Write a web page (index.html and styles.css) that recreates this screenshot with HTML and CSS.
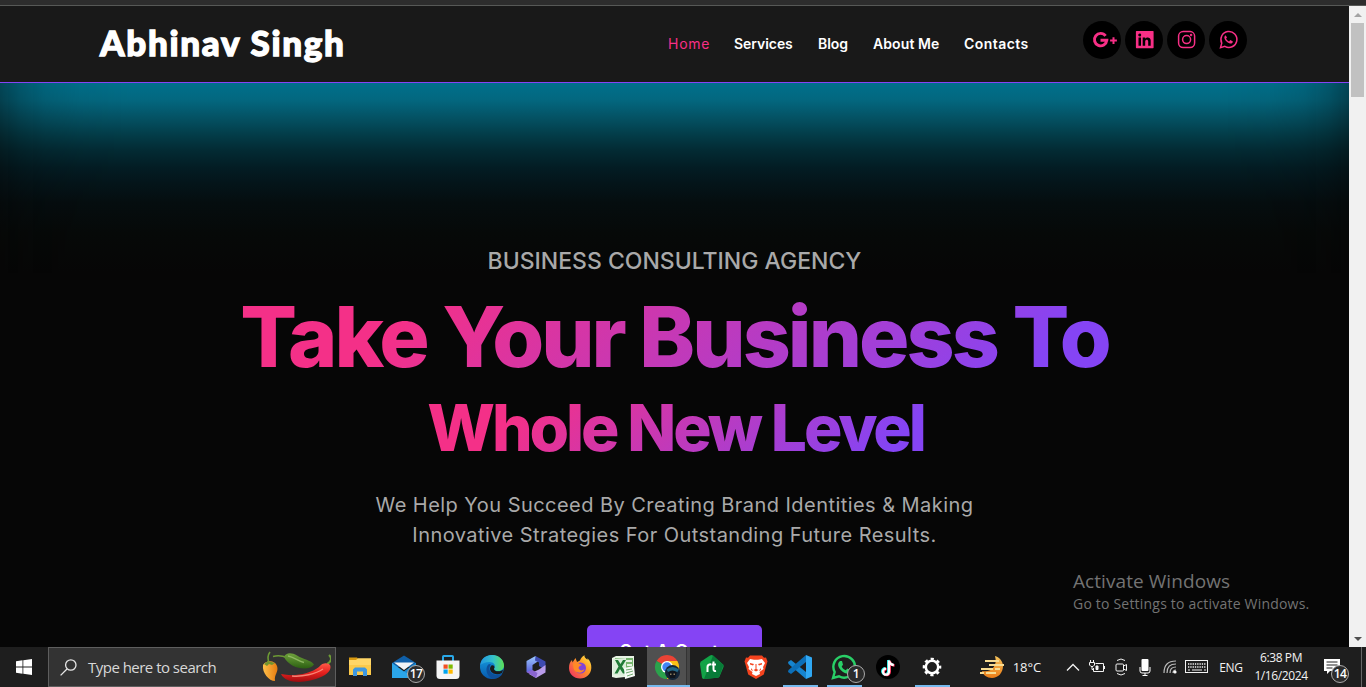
FILE: index.html
```html
<!DOCTYPE html>
<html lang="en">
<head>
<meta charset="utf-8">
<title>Abhinav Singh</title>
<link rel="stylesheet" href="styles.css">
</head>
<body>
<div class="browser-edge"></div>
<div class="viewport">
  <div class="page">
    <header class="header">
      <div class="brand">Abhinav Singh</div>
      <nav class="nav">
        <a class="active">Home</a><a>Services</a><a>Blog</a><a class="about">About Me</a><a class="contacts">Contacts</a>
      </nav>
      <div class="social">
        <a><svg viewBox="0 0 38 38"><path d="M22.600 14.900a6.200 6.200 0 1 0 1.200 4.400H17.500" fill="none" stroke="#f72f86" stroke-width="2.900"/><path d="M30.500 16.200v6.800M27.100 19.600h6.800" stroke="#f72f86" stroke-width="2"/></svg></a>
        <a><svg viewBox="0 0 38 38"><path fill="#f72f86" fill-rule="evenodd" d="M11.500 10h16.500a.6.600 0 0 1 .6.6v16a.6.6 0 0 1-.6.600H11.500a.6.6 0 0 1-.6-.6v-16a.6.6 0 0 1 .6-.6zM13.500 16.600v8.200H16v-8.200zM14.700 12.400a1.500 1.500 0 1 0 .01 3a1.500 1.500 0 0 0-.01-3zM17.700 16.600v8.200h2.500v-4.300c0-2.500 3-2.500 3 0v4.300h2.500v-5.200c0-3.600-4-4-5.500-2v-1z"/></svg></a>
        <a><svg viewBox="0 0 38 38" fill="none" stroke="#f72f86" stroke-width="1.500"><rect x="11.600" y="10.600" width="16" height="16" rx="4.500"/><circle cx="19.600" cy="18.600" r="4"/><circle cx="24.100" cy="14.100" r=".5"/></svg></a>
        <a><svg viewBox="0 0 38 38"><path d="M11.500 26.600l1.250-4.500a8 8 0 1 1 3.100 3.300z" fill="none" stroke="#f72f86" stroke-width="1.500"/><path fill="#f72f86" d="M16.600 14.200c-2.500 1.700-.8 4.900 1.600 6.900 2.300 1.900 5.300 2.300 5.700-.6l-2.600-1.400-1.200 1.300c-1.500-.5-2.500-1.500-3-2.900l.9-1.100z"/></svg></a>
      </div>
    </header>
    <main class="hero">
      <div class="glow"></div>
      <p class="kicker">BUSINESS CONSULTING AGENCY</p>
      <h1 class="title">Take Your Business To</h1>
      <h2 class="title second">Whole New Level</h2>
      <p class="lead">We Help You Succeed By Creating Brand Identities &amp; Making<br>Innovative Strategies For Outstanding Future Results.</p>
      <a class="cta">Get A Quote</a>
    </main>
  </div>
  <div class="scrollbar"><i class="up"></i><i class="thumb"></i><i class="down"></i></div>
  <div class="activate"><div class="a1">Activate Windows</div><div class="a2">Go to Settings to activate Windows.</div></div>
</div>
<footer class="taskbar">
  <div class="start"><svg width="16" height="16" viewBox="0 0 16 16" fill="#fff"><path d="M0 2.200l6.500-.9v6.300H0zM7.300 1.200L16 0v7.600H7.300zM0 8.400h6.500v6.300L0 13.800zM7.300 8.400H16V16l-8.700-1.200z"/></svg></div>
  <div class="search">
    <svg width="17" height="17" viewBox="0 0 17 17" fill="none" stroke="#e6e6e6" stroke-width="1.300"><circle cx="10.800" cy="6" r="5.200"/><path d="M7 10L.6 16.400"/></svg>
    <span>Type here to search</span>
    <svg class="peppers" width="70" height="34" viewBox="0 0 70 34">
      <defs>
        <linearGradient id="pr" x2="0" y2="1"><stop offset="0" stop-color="#ff5a48"/><stop offset=".5" stop-color="#e6211e"/><stop offset="1" stop-color="#9c0c10"/></linearGradient>
        <linearGradient id="pg" x2="0" y2="1"><stop offset="0" stop-color="#6fa23c"/><stop offset="1" stop-color="#2c5f12"/></linearGradient>
        <linearGradient id="po"><stop offset="0" stop-color="#ffc04a"/><stop offset="1" stop-color="#e57c10"/></linearGradient>
      </defs>
      <path d="M8 14C7 9 6 6 9 2M12 6.500c5-1.500 9-1 14 1" fill="none" stroke="#6d9a35" stroke-width="1.600"/>
      <path d="M2 15c3-5 12-5 14 1 2 6-3 8-2 15-6 0-13-8-12-16z" fill="url(#po)"/>
      <path d="M3 14l4-3 7 2-3 2-3-1-2 2z" fill="#73942d"/>
      <path d="M23 7c2-5 8-4.500 13-1.500 7 4.500 13 4 17 9-4 7-24 5-30-7.500z" fill="url(#pg)"/>
      <path d="M27 6c6 1 10 5 16 6.500" stroke="#a4ca76" stroke-width="1.500" fill="none" opacity=".7"/>
      <path d="M66 14c5-3 5-6 2-9" fill="none" stroke="#6d9a35" stroke-width="2"/>
      <path d="M20 24c13 3 29 0 38-7 4-5 9-4 11-2 2 4-2 9-9 12-13 6-35 8-40-3z" fill="url(#pr)"/>
      <path d="M31 26c10 1 24-2 31-7" stroke="#ff9b8a" stroke-width="1.400" fill="none" opacity=".8"/>
    </svg>
  </div>
  <div class="apps">
    <div class="app"><svg viewBox="0 0 26 26"><path d="M2 3.500h8l2 2.500H2z" fill="#d99a10"/><path d="M2 6h7l2-1.700h13V21H2z" fill="#ffd667"/><path d="M2 11h22v10H2z" fill="#fbc94a"/><path d="M6 22v-6.500l2-2h10l2 2V22h-4v-4.500h-6V22z" fill="#3d97e0"/></svg></div>
    <div class="app mail"><svg viewBox="0 0 26 26"><path d="M0 9L12 1.500 24 9v4H0z" fill="#0f5fa8"/><path d="M0 9l12 8.500L24 9v15H0z" fill="#2ba5e8"/><path d="M12 17.500L24 9v15z" fill="#1687d0"/><path d="M2 8.500h20L12 16z" fill="#f1f3f6"/></svg><b class="count">17</b></div>
    <div class="app"><svg viewBox="0 0 26 26"><path d="M8 7V2.800q0-.8.800-.8h8.400q.8 0 .8.800V7" fill="none" stroke="#29a8e8" stroke-width="2"/><path d="M1.500 6.500h23v15q0 3.500-3.500 3.500H5q-3.500 0-3.500-3.500z" fill="#f5f5f5"/><path d="M8.500 10.500h4.200v4.200H8.500z" fill="#f25022"/><path d="M13.500 10.500h4.200v4.200h-4.200z" fill="#7fba00"/><path d="M8.500 15.500h4.200v4.200H8.500z" fill="#00a4ef"/><path d="M13.500 15.500h4.200v4.200h-4.200z" fill="#ffb900"/></svg></div>
    <div class="app"><svg viewBox="0 0 26 26"><defs><linearGradient id="e1"><stop offset="0" stop-color="#2296e2"/><stop offset=".55" stop-color="#35c1c9"/><stop offset="1" stop-color="#5de054"/></linearGradient><linearGradient id="e2" x2="0" y2="1"><stop offset="0" stop-color="#16a2e4"/><stop offset="1" stop-color="#0858ac"/></linearGradient></defs><circle cx="13" cy="13" r="12" fill="url(#e2)"/><path d="M1.200 11C2 4.500 7 1 13 1c7 0 12 5 12 10.500 0 4-3 5.500-6 5.500-3.500 0-4.500-1.500-3.500-3 1.600-3-1-6-5-6-4 0-7.500 1.500-9.300 3z" fill="url(#e1)"/><path d="M10 10c-4 3-3.500 11 3 14.500 5 1 9-2 10.500-5-6 3-12 1-13-4-.3-2 .2-3.500 1.500-5z" fill="#0d4f9a"/><path d="M15.500 13.500c-1.500 2 .5 4 4 3.700 2 0 4-.8 4.800-1.800L23 19c-5 2.500-11 1-12-4 0-2 1-4 2.500-3.800 1.500 0 2 1 2 2.300z" fill="#1a1a1a"/></svg></div>
    <div class="app"><svg viewBox="0 0 26 26"><defs><linearGradient id="m1" x2="0" y2="1"><stop offset="0" stop-color="#9cc9ff"/><stop offset="1" stop-color="#5254d8"/></linearGradient></defs><path d="M12.500 2L3.500 7v11l6 2.500v-9.500l6-4z" fill="url(#m1)"/><path d="M12.500 2l10 5.500v8.500l-6.500-4V8.500l-4-2z" fill="#3d4ab0"/><path d="M22.500 11v7.500L13 24l-7-4 10-4.500z" fill="#b99bea"/><path d="M3.500 18l6-2 5 3L13 24z" fill="#8a64cf"/></svg></div>
    <div class="app"><svg viewBox="0 0 26 26"><defs><linearGradient id="f1" x1="1" x2="0" y2="1"><stop offset="0" stop-color="#fff04c"/><stop offset=".4" stop-color="#ff9a24"/><stop offset="1" stop-color="#f0256a"/></linearGradient></defs><path d="M2 14c0-4 1-6 3-8l.5 2.500L8.500 4l1.500 4 3-1.500C14 4 15 2.500 17.500 1.200c-.3 2 1.200 3.300 3 4.600V4.300C23.500 7 24.500 11 24.300 14c-.3 6-5 10.500-11.200 10.500S2 20 2 14z" fill="url(#f1)"/><circle cx="13.500" cy="14" r="5.500" fill="#8043d8"/><path d="M6 10c2-2 5-1 7 0l2 1c-2 1-3 1-3.500 3 1 3 4 3 6 1-1 5-10 5-11-1z" fill="#ff8a26"/></svg></div>
    <div class="app excel"><svg viewBox="0 0 26 26"><path d="M2 4l4-2h18v20l-18 2-4-1z" fill="#e9f3e5"/><path d="M5 4h18v17H5z" fill="#76b66e"/><path d="M16 6h6v2h-6zM17 10h5v2h-5zM17 14h5v2h-5z" fill="#e5f2e2"/><path d="M3 5l13-1v18L3 21z" fill="#dceeda"/><path d="M5 6h3l2.500 4L13 6h3l-4 6.500 4.500 7H13l-3-4.500-2.500 4.500h-3l4-7z" fill="#207b36"/><path d="M14 14l10-2 1 10-10 3z" fill="#f6faf5"/><path d="M16 16l6-1M16 19l7-2M17 22l6-2" stroke="#72aa70" stroke-width="1"/></svg></div>
    <div class="app current running"><svg viewBox="0 0 26 26"><path d="M13 13L2.600 7A12 12 0 0 1 23.400 7z" fill="#ea4335"/><path d="M13 13L2.600 7a12 12 0 0 0 10.400 18l4-10z" fill="#2ba24c"/><path d="M13 13l-.0 12A12 12 0 0 0 23.400 7H13z" fill="#fbc116"/><circle cx="13" cy="13" r="6" fill="#fff"/><circle cx="13" cy="13" r="4.700" fill="#4285f4"/><circle cx="18.500" cy="18.500" r="7.500" fill="#142638"/><path d="M12.500 15.500q6-5 12.500 0l-2 3h-8.500z" fill="#246987"/><path d="M14 18q4.500-3 9 0l-2 6h-5z" fill="#11151b"/><path d="M16 19.500h1.500v1.500H16zM19.500 19.500H21v1.500h-1.500z" fill="#8d8062"/></svg></div>
    <div class="app"><svg viewBox="0 0 26 26"><path d="M11 1.500q1.500-.8 3 0l10 9q1 1 .5 2.500l-4 9.500q-.5 1-2 1.200L5 25q-1.500 0-2-1.500L1 10q0-1.500 1-2.500z" fill="#12a347"/><path d="M14 1.500l10.500 9.500L20 23.500 5 25z" fill="#087b38"/><path d="M8.500 18v-5q0-2.700 3.500-2.700M14.500 7.500v7.500q0 2.500 2.500 2M12.500 10.500h4.500" fill="none" stroke="#fff" stroke-width="2"/></svg></div>
    <div class="app"><svg viewBox="0 0 26 26"><path d="M7 1.500h12l2 2.300 2-.2 1.500 4-.7 2-3 11L13 25l-7.800-4.400-3-11-.7-2 1.500-4 2 .2z" fill="#f4431e"/><path d="M7 5l4 .8h4l4-.8 3 4-2 4 .5 2-4 3 .5 2-4 2-4-2 .5-2-4-3 .5-2-2-4z" fill="#fff"/><path d="M7 9l4 1-1 1.500-3-1zM19 9l-4 1 1 1.500 3-1zM12.500 10h1v5l2 1-2.500 1.500L10.500 16l2-1zM8.500 14l1.500 3-2-1zM17.500 14L16 17l2-1z" fill="#f4431e"/></svg></div>
    <div class="app running"><svg viewBox="0 0 26 26"><path d="M1 8l3-2 15 12v7L1.500 10z" fill="#1684cf"/><path d="M1 18l3 2L19 8V1L1.500 16z" fill="#0c6fb8"/><path d="M19 1l6 2.500v19L19 25z" fill="#30a8f3"/></svg></div>
    <div class="app running"><svg viewBox="0 0 26 26"><path d="M2 24l1.700-6a10.800 10.800 0 1 1 4.300 4.300z" fill="none" stroke="#29cf67" stroke-width="2.400"/><path fill="#29cf67" d="M9 7c-4 3-1 8 3 11 4 2.500 7 2.500 8-1.500l-3.500-2-1.800 1.800c-2-.8-3.200-2-4-3.800l1.300-1.700L11 7z"/></svg><b class="count">1</b></div>
    <div class="app"><svg viewBox="0 0 26 26"><circle cx="13" cy="13" r="12" fill="#000"/><g fill="none" stroke-width="2.300"><path d="M13.200 6v11.200a3 3 0 1 1-3-3M13.200 6q.6 4 4.800 4.500" stroke="#25f4ee"/><path d="M14.800 7v11a3 3 0 1 1-3-3M14.800 7q.6 4 4.800 4.500" stroke="#fe2c55"/><path d="M14 6.500v11.200a3 3 0 1 1-3-3M14 6.500q.6 4 4.800 4.500" stroke="#fff"/></g></svg></div>
    <div class="app running"><svg viewBox="0 0 26 26"><g fill="none" stroke="#fff"><circle cx="13" cy="13" r="6.200" stroke-width="2.500"/><circle cx="13" cy="13" r="8" stroke-width="2.600" stroke-dasharray="3.140 3.140" stroke-dashoffset="1.570"/></g></svg></div>
  </div>
  <div class="tray">
    <div class="weather"><svg width="24" height="24" viewBox="0 0 24 24"><defs><linearGradient id="w1" x2="0" y2="1"><stop offset="0" stop-color="#f5c35c"/><stop offset="1" stop-color="#ec7c16"/></linearGradient></defs><path d="M15 1c4 1 8 5 8 10 0 7-5 12-11 12-5 0-9-3-10-7 9 2 16-5 13-15z" fill="url(#w1)"/><path d="M5 6h14M9 10h15M1 14h12M6 18h10M0 18h4M15 14h5" stroke="#f8dc92" stroke-width="1.800"/></svg></div>
    <div class="temp">18°C</div><div></div>
    <div><svg width="14" height="9" viewBox="0 0 14 9"><path d="M1 7.500l6-6 6 6" fill="none" stroke="#f2f2f2" stroke-width="1.300"/></svg></div>
    <div><svg width="16" height="14" viewBox="0 0 16 14" fill="none" stroke="#f2f2f2"><path d="M6.500 3.500h8v8H4.500V8M15.500 6v3M1.500 0v2M4.500 0v2M.5 2.500h5v2.500L4 6.500H2L.5 5zM3 6.500v3h1.500"/><path d="M7 6h2v3.500H7z" fill="#f2f2f2"/></svg></div>
    <div><svg width="14" height="18" viewBox="0 0 14 18" fill="none" stroke="#f2f2f2"><rect x="2" y="6" width="7.500" height="7" rx="1"/><path d="M9.500 8l3-1.500v6l-3-1.500M3 2.500Q7-.5 11 2.500M3 15.500q4 3 8 0"/></svg></div>
    <div><svg width="12" height="17" viewBox="0 0 12 17" fill="#fff"><rect x="2.500" width="7" height="12" rx="1"/><path d="M1 8v4q0 2 2 2h6q2 0 2-2V8M6 14v2.300M3.500 16.500h5" fill="none" stroke="#fff"/></svg></div>
    <div class="wifi"><svg width="14" height="14" viewBox="0 0 14 14" fill="none" stroke="#bbb" stroke-width="1.200"><path d="M1 13Q1 1 13 1M4 13Q4 4 13 4M7 13q0-6 6-6M10 13q0-3 3-3"/><circle cx="12" cy="12" r="1" fill="#fff" stroke="#fff"/></svg></div>
    <div><svg width="24" height="14" viewBox="0 0 24 14" fill="none" stroke="#f2f2f2"><rect x=".5" y=".5" width="22" height="12"/><path d="M3 4h18M3 7h18" stroke-width="1.300" stroke-dasharray="1.300 1"/><path d="M3 10h2M7 10h10M19 10h2"/></svg></div>
    <div class="lang">ENG</div>
    <div class="clock"><span class="time">6:38 PM</span><span>1/16/2024</span></div>
    <div class="notice"><svg width="18" height="18" viewBox="0 0 18 18"><path d="M1 1h16v12H7l-3 3v-3H1z" fill="#fff"/><path d="M3.500 4h11M3.500 7h11M3.500 10h6" stroke="#222"/></svg><b class="count">14</b></div>
    <div class="peek"></div>
  </div>
</footer>
</body>
</html>
```

FILE: styles.css
```css
* { box-sizing: border-box; }
body { margin: 0; width: 1366px; height: 687px; overflow: hidden; background: #060606; font-family: Inter, "Open Sans", sans-serif; display: flex; flex-direction: column; }
svg { display: block; }
.browser-edge { height: 6px; flex: none; background: #2d2d2d; border-bottom: 1px solid #575957; }
.viewport { height: 641px; flex: none; display: flex; position: relative; overflow: hidden; }
.page { width: 1349px; height: 641px; overflow: hidden; display: flex; flex-direction: column; }
.header { height: 77px; flex: none; background: #191919; border-bottom: 1px solid #8544f4; display: grid; grid-template-columns: 568px 415px 1fr; padding-left: 100px; }
.brand { font: 900 35px/72px Lato, sans-serif; letter-spacing: 1.7px; color: #fff; -webkit-text-stroke: 1.300px #fff; white-space: nowrap; }
.nav { display: grid; grid-template-columns: 66px 84px 55px 91px 65px; font-size: 14px; line-height: 76px; font-weight: 600; color: #fff; letter-spacing: -.05px; white-space: nowrap; }
.nav .active { color: #f72f86; font-weight: 400; letter-spacing: .75px; }
.nav .about { letter-spacing: .1px; }
.nav .contacts { letter-spacing: .45px; }
.social { display: flex; gap: 4px; padding-top: 15px; }
.social a { width: 38px; height: 38px; border-radius: 50%; background: #000; }
.hero { flex: 1; position: relative; display: flex; flex-direction: column; align-items: center; color: #a9a9a9; white-space: nowrap; }
.glow { position: absolute; left: 0; right: 0; top: 0; height: 190px; background: linear-gradient(#00708c 0, #03677f 17px, #044f60 37px, #033c48 52px, #032b34 67px, #031d24 84px, #04151a 100px, #050d0f 120px, #060908 150px, #060606 190px); -webkit-mask-image: linear-gradient(90deg, rgba(0,0,0,.6), rgba(0,0,0,.77) 20px, rgba(0,0,0,.9) 45px, rgba(0,0,0,.97) 80px, #000 130px, #000 calc(100% - 130px), rgba(0,0,0,.97) calc(100% - 80px), rgba(0,0,0,.9) calc(100% - 45px), rgba(0,0,0,.77) calc(100% - 20px), rgba(0,0,0,.6)); }
.kicker { position: relative; margin: 160px 0 0; font-size: 23px; font-weight: 500; line-height: 36px; }
.title { position: relative; margin: 10px 0 0; font-size: 84px; line-height: 96px; font-weight: 800; letter-spacing: -2.95px; background: linear-gradient(135deg, #f43088 20%, #8544f4 90%); -webkit-background-clip: text; background-clip: text; color: transparent; }
.title.second { margin: 5px 0 0 2px; font-size: 64px; line-height: 76px; letter-spacing: -3.1px; }
.lead { margin: 24px 0 0; font-size: 20px; line-height: 30px; letter-spacing: .45px; text-align: center; }
.cta { width: 175px; height: 56px; margin-top: 75px; border-radius: 5px; background: #8544f4; color: #fff; font-size: 18px; font-weight: 600; line-height: 53px; letter-spacing: .5px; text-align: center; }
.scrollbar { width: 17px; background: #f1f1f1; display: flex; flex-direction: column; align-items: center; padding: 7px 0 6px; }
.up, .down { border: 4px solid transparent; border-top: 0; border-bottom: 4px solid #a3a3a3; width: 8px; }
.thumb { width: 13px; height: 74px; background: #c1c1c1; margin-top: 6px; }
.down { margin-top: auto; border-bottom: 0; border-top: 4px solid #505050; }
.activate { position: absolute; left: 1073px; top: 562px; font-family: "Open Sans", sans-serif; color: #737373; white-space: nowrap; }
.a1 { font-size: 19px; line-height: 26px; letter-spacing: .07px; }
.a2 { font-size: 14px; line-height: 20px; letter-spacing: .2px; }
.taskbar { height: 40px; flex: none; background: #1e1e1e; display: flex; font-family: "Open Sans", sans-serif; color: #f2f2f2; }
.start { width: 48px; display: flex; align-items: center; justify-content: center; }
.search { width: 288px; margin-right: 2px; border: 1px solid #5e5e5e; background: #333; display: flex; align-items: center; padding: 0 4px 0 11px; font-size: 15px; letter-spacing: -.52px; color: #d8d8d8; white-space: nowrap; }
.search span { margin-left: 11px; }
.peppers { margin-left: auto; }
.apps { display: flex; width: 616px; }
.app { width: 44px; position: relative; display: flex; align-items: center; justify-content: center; }
.app > svg { width: 26px; height: 26px; }
.mail > svg { margin-left: 2px; }
.excel > svg { margin-right: 2px; }
.running::after { content: ""; position: absolute; left: 5px; right: 4px; bottom: 0; height: 2px; background: #76b9ed; }
.current { background: linear-gradient(90deg, #505050 0 39px, #343434 39px 40px, #454545 40px); margin: 0 0 0 1px; width: 43px; padding-right: 3px; }
.current::after { left: 0; right: 0; }
.count { position: absolute; left: 25px; top: 18px; width: 18px; height: 18px; border: 1px solid #aaa; border-radius: 50%; background: #2c2c2c; color: #fff; font-size: 12px; line-height: 16px; text-align: center; font-weight: 600; letter-spacing: -.6px; }
.tray { margin-left: 24px; display: grid; grid-template-columns: 30px 38px 15px 24px 24px 24px 24px 26px 28px 40px 60px 50px 5px; font-size: 12px; }
.tray > div { display: flex; align-items: center; justify-content: center; position: relative; white-space: nowrap; }
.tray .weather { padding-right: 2px; }
.tray .temp { font-size: 13px; }
.lang { letter-spacing: -.3px; }
.tray .clock { flex-direction: column; line-height: 18px; letter-spacing: -.4px; }
.notice svg { margin-right: 8px; }
.notice .count { left: 20px; }
.peek { border-left: 1px solid #666; }
```
